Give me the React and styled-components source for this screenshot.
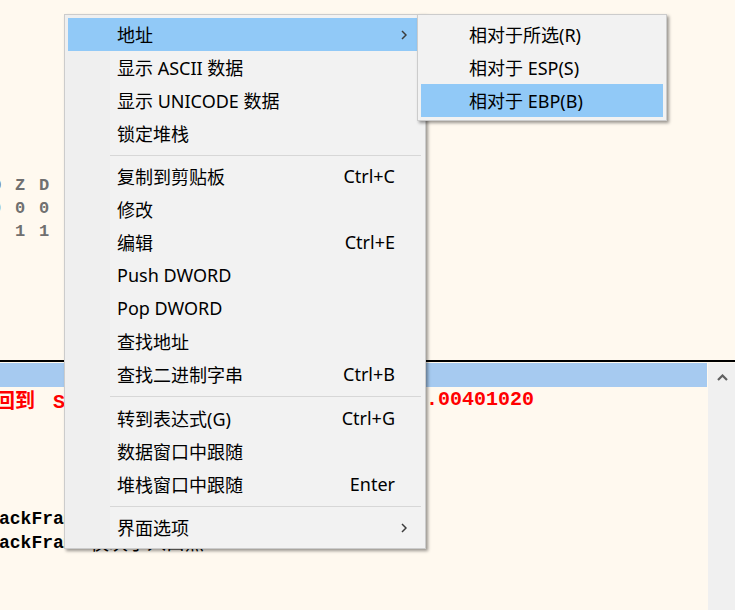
import React from 'react';
import styled, { createGlobalStyle } from 'styled-components';

const GlobalStyle = createGlobalStyle`
  html, body {
    margin: 0;
    padding: 0;
  }
  body {
    background: #fff9ef;
    overflow: hidden;
  }
`

const Screen = styled.div`
  position: relative;
  width: 735px;
  height: 610px;
  overflow: hidden;
  background: #fff9ef;
  display: flex;
  flex-direction: column;
`

const TopPane = styled.div`
  flex: none;
  height: 362px;
  box-sizing: border-box;
  padding-top: 174px;
  border-bottom: 2px solid #000;
`

const FlagLine = styled.div`
  margin-left: -9px;
  font-family: 'Liberation Mono', monospace;
  font-weight: 700;
  font-size: 17px;
  letter-spacing: 1.8px;
  line-height: 23px;
  color: #707070;
  white-space: pre;
`

const BottomPane = styled.div`
  flex: 1;
  display: flex;
  padding-top: 1px;
  min-height: 0;
`

const StackList = styled.div`
  flex: 1;
  display: flex;
  flex-direction: column;
  overflow: hidden;
`

const StackRow = styled.div`
  flex: none;
  display: flex;
  align-items: center;
  height: 24px;
  margin-right: 1px;
  background: ${p => (p.$selected ? '#a6caf0' : 'transparent')};
  color: ${p => (p.$red ? '#ff0000' : '#000')};
  font-family: 'Liberation Mono', 'Noto Sans CJK SC', monospace;
  font-weight: 700;
  font-size: ${p => (p.$red ? 20 : 18)}px;
  white-space: pre;
  overflow: hidden;
`

const Cell = styled.span`
  flex: none;
  width: ${p => p.$w}px;
  margin-left: ${p => p.$offset || 0}px;
  overflow: hidden;
`

const Symbol = styled.span`
  margin-left: 6px;
`

const Note = styled.span`
  font-family: 'Noto Sans CJK SC', sans-serif;
  font-weight: 400;
  font-size: 19px;
  position: relative;
  top: -2px;
`

const ScrollBar = styled.div`
  flex: none;
  width: 27px;
  background: #f0f0f0;
`

const ScrollButton = styled.div`
  height: 29px;
  display: flex;
  align-items: center;
  justify-content: center;
  padding-left: 1px;
`

const Menu = styled.div`
  position: absolute;
  left: ${p => p.$x}px;
  top: ${p => p.$y}px;
  width: ${p => p.$w}px;
  box-sizing: border-box;
  padding: 3px;
  border: 1px solid #cccccc;
  background: ${p => (p.$gutter
    ? 'linear-gradient(to right, #efefef 45px, #f2f2f2 45px)'
    : '#f2f2f2')};
  box-shadow: 2px 2px 3px rgba(0, 0, 0, 0.4);
  font-family: 'Noto Sans', 'Noto Sans CJK SC', sans-serif;
  font-size: 18px;
  color: #000;
`

const Item = styled.div`
  display: flex;
  align-items: center;
  box-sizing: border-box;
  height: 33px;
  padding-left: ${p => p.$indent}px;
  padding-right: 15px;
  padding-bottom: 2px;
  background: ${p => (p.$active ? '#91c9f7' : 'transparent')};
  white-space: nowrap;
`

const Label = styled.span`
  flex: 1;
`

const Shortcut = styled.span`
  margin-right: 12px;
`

const Separator = styled.div`
  height: 10.5px;
  display: flex;
  align-items: center;
  &::after {
    content: '';
    flex: 1;
    height: 1px;
    margin-left: 42px;
    margin-right: 1px;
    background: #d7d7d7;
  }
`

const Chevron = () => (
  <svg width="6" height="10" viewBox="0 0 6 10" style={{ marginTop: 2 }}>
    <polyline points="1,1 5,5 1,9" fill="none" stroke="#3c3c3c" strokeWidth="1.5" />
  </svg>
)

const UpArrow = () => (
  <svg width="11" height="7" viewBox="0 0 11 7">
    <polyline points="1,6 5.5,1.5 10,6" fill="none" stroke="#606060" strokeWidth="2.2" />
  </svg>
)

const menuItems = [
  { label: '地址', sub: true, active: true },
  { label: '显示 ASCII 数据' },
  { label: '显示 UNICODE 数据' },
  { label: '锁定堆栈' },
  'sep',
  { label: '复制到剪贴板', key: 'Ctrl+C' },
  { label: '修改' },
  { label: '编辑', key: 'Ctrl+E' },
  { label: 'Push DWORD' },
  { label: 'Pop DWORD' },
  { label: '查找地址' },
  { label: '查找二进制字串', key: 'Ctrl+B' },
  'sep',
  { label: '转到表达式(G)', key: 'Ctrl+G' },
  { label: '数据窗口中跟随' },
  { label: '堆栈窗口中跟随', key: 'Enter' },
  'sep',
  { label: '界面选项', sub: true },
]

const subItems = [
  { label: '相对于所选(R)' },
  { label: '相对于 ESP(S)' },
  { label: '相对于 EBP(B)', active: true },
]

const App = () => {
  return (
    <Screen>
      <GlobalStyle />
      <TopPane>
        <FlagLine>O Z D</FlagLine>
        <FlagLine>0 0 0</FlagLine>
        <FlagLine>{'  1 1'}</FlagLine>
      </TopPane>

      <BottomPane>
        <StackList>
          <StackRow $selected />
          <StackRow $red>
            <Cell $w={431} $offset={-5}>
              回到<Symbol> Stack_Demo</Symbol>
            </Cell>
            <span>.00401020</span>
          </StackRow>
          <StackRow />
          <StackRow />
          <StackRow />
          <StackRow />
          <StackRow>
            <Cell $w={120} $offset={-1}>ackFrame</Cell>
          </StackRow>
          <StackRow>
            <Cell $w={91} $offset={-1}>ackFrame</Cell>
            <Note>仅次于入口点</Note>
          </StackRow>
        </StackList>
        <ScrollBar>
          <ScrollButton>
            <UpArrow />
          </ScrollButton>
        </ScrollBar>
      </BottomPane>

      <Menu $x={64} $y={14} $w={362} $gutter>
        {menuItems.map((item, i) =>
          item === 'sep' ? (
            <Separator key={i} />
          ) : (
            <Item key={i} $indent={49} $active={item.active}>
              <Label>{item.label}</Label>
              {item.key && <Shortcut>{item.key}</Shortcut>}
              {item.sub && <Chevron />}
            </Item>
          )
        )}
      </Menu>

      <Menu $x={417} $y={14} $w={250}>
        {subItems.map((item, i) => (
          <Item key={i} $indent={48} $active={item.active}>
            <Label>{item.label}</Label>
          </Item>
        ))}
      </Menu>
    </Screen>
  );
};

export default App;
